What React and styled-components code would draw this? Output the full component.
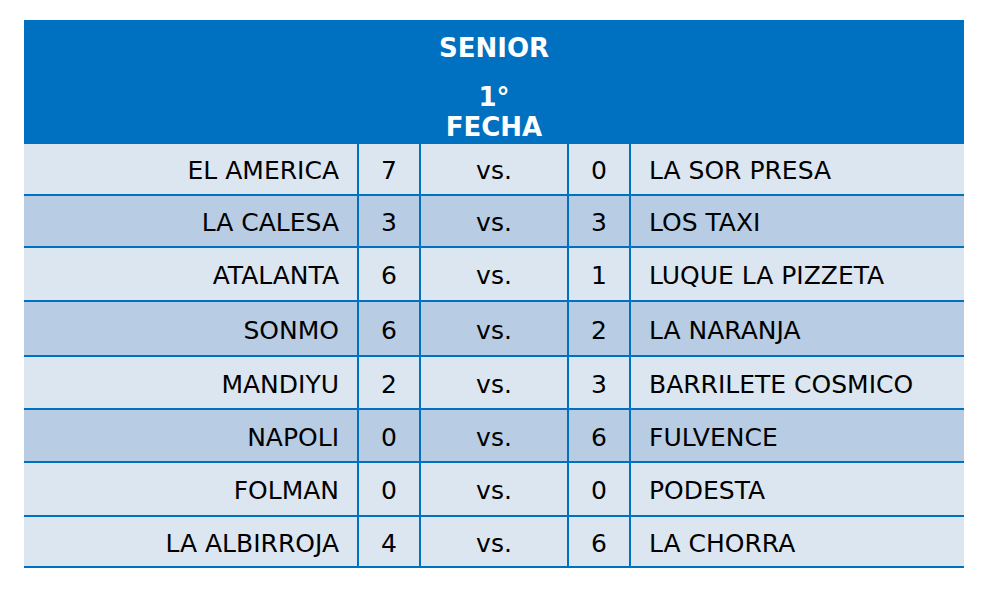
import React from 'react';
import styled, { createGlobalStyle } from 'styled-components';

const matches = [
  { home: 'EL AMERICA', hs: 7, as: 0, away: 'LA SOR PRESA', h: 52, dark: false },
  { home: 'LA CALESA', hs: 3, as: 3, away: 'LOS TAXI', h: 52, dark: true },
  { home: 'ATALANTA', hs: 6, as: 1, away: 'LUQUE LA PIZZETA', h: 54, dark: false },
  { home: 'SONMO', hs: 6, as: 2, away: 'LA NARANJA', h: 55, dark: true },
  { home: 'MANDIYU', hs: 2, as: 3, away: 'BARRILETE COSMICO', h: 53, dark: false },
  { home: 'NAPOLI', hs: 0, as: 6, away: 'FULVENCE', h: 53, dark: true },
  { home: 'FOLMAN', hs: 0, as: 0, away: 'PODESTA', h: 54, dark: false },
  { home: 'LA ALBIRROJA', hs: 4, as: 6, away: 'LA CHORRA', h: 51, dark: false },
];

export default function App() {
  return (
    <>
      <Global />
      <Sheet>
        <Header>
          <Title>SENIOR</Title>
          <Round>
            1°
            <br />
            FECHA
          </Round>
        </Header>
        {matches.map((m, i) => (
          <Row key={i} $shade={m.dark} $h={m.h}>
            <Team $align="right">{m.home}</Team>
            <Cell>{m.hs}</Cell>
            <Cell>vs.</Cell>
            <Cell>{m.as}</Cell>
            <Team $align="left">{m.away}</Team>
          </Row>
        ))}
      </Sheet>
    </>
  );
}

const Global = createGlobalStyle`
  * { box-sizing: border-box; }
  body {
    margin: 0;
    background: #fff;
    font-family: "DejaVu Sans", Verdana, sans-serif;
  }
`;

const Sheet = styled.div`
  width: 940px;
  margin: 20px 0 0 24px;
`;

const Header = styled.div`
  background: #0070c0;
  color: #fff;
  font-weight: bold;
  font-size: 26px;
  text-align: center;
`;

const Title = styled.div`
  height: 56px;
  line-height: 56px;
`;

const Round = styled.div`
  height: 68px;
  line-height: 30px;
  padding-top: 6px;
`;

const Row = styled.div`
  display: grid;
  grid-template-columns: 333px 62px 148px 62px 335px;
  height: ${p => p.$h}px;
  background: ${p => (p.$shade ? '#b8cce4' : '#dce6f1')};
  border-bottom: 2px solid #0070c0;
  font-size: 25px;
  color: #000;
`;

const Cell = styled.div`
  display: flex;
  align-items: center;
  justify-content: center;
  padding-top: 3px;
  border-left: 2px solid #0070c0;
`;

const Team = styled.div`
  display: flex;
  align-items: center;
  justify-content: ${p => (p.$align === 'right' ? 'flex-end' : 'flex-start')};
  padding: 3px 18px 0;
  border-left: ${p => (p.$align === 'right' ? 'none' : '2px solid #0070c0')};
`;
